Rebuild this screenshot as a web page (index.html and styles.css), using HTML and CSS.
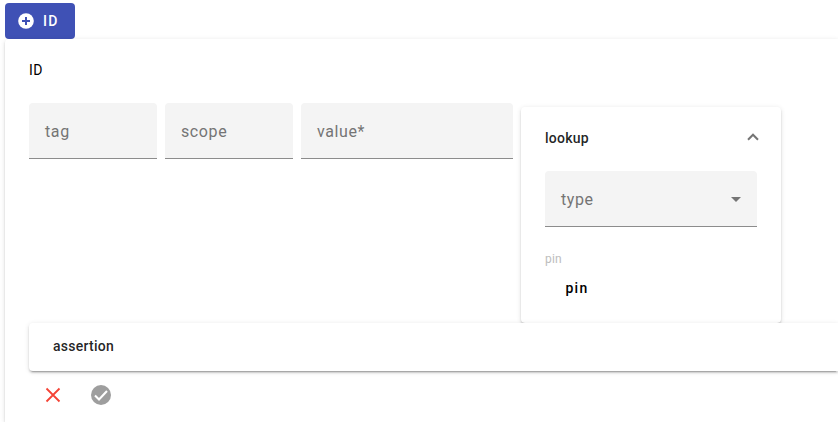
FILE: index.html
```html
<!DOCTYPE html>
<html lang="en">
<head>
<meta charset="utf-8">
<title>ID</title>
<link rel="stylesheet" href="styles.css">
</head>
<body>
<button class="add-button">
  <svg class="add-icon" viewBox="0 0 16 16"><circle cx="8" cy="8" r="7.8" fill="#fff"/><path d="M8 4v8M4 8h8" stroke="#3f51b5" stroke-width="2"/></svg>
  <span>ID</span>
</button>
<section class="panel main-panel">
  <h2 class="panel-title main-title">ID</h2>
  <div class="fields">
    <div class="field">tag</div>
    <div class="field">scope</div>
    <div class="field field-wide">value*</div>
    <section class="panel lookup">
      <header class="lookup-header">
        <h3 class="panel-title">lookup</h3>
        <svg class="chevron" viewBox="0 0 12 8"><path d="M1 6.7 6 1.7l5 5" fill="none" stroke="#757575" stroke-width="2"/></svg>
      </header>
      <div class="field field-wide select">type
        <svg class="arrow" viewBox="0 0 10 5"><path d="M0 0h10L5 5z" fill="#757575"/></svg>
      </div>
      <div class="pin-label">pin</div>
      <div class="pin-button">pin</div>
    </section>
  </div>
  <section class="panel assertion"><h3 class="panel-title">assertion</h3></section>
  <div class="actions">
    <svg class="action-icon" viewBox="0 0 24 24"><path d="m5.5 5.5 13 13m0-13-13 13" stroke="#f44336" stroke-width="1.8"/></svg>
    <svg class="action-icon" viewBox="0 0 24 24"><circle cx="12" cy="12" r="10" fill="#9e9e9e"/><path d="m6 12.5 4 4 8-8.5" fill="none" stroke="#fff" stroke-width="2.1"/></svg>
  </div>
</section>
</body>
</html>
```
FILE: styles.css
```css
* { box-sizing: border-box; }
body {
  height: 100vh;
  margin: 0;
  padding: 3px 0 0 5px;
  background: #fff;
  font-family: Roboto, sans-serif;
  overflow: hidden;
}
.add-button {
  display: flex;
  align-items: center;
  gap: 9px;
  width: 70px;
  height: 36px;
  padding: 0 0 0 13px;
  border: 0;
  border-radius: 4px;
  background: #3f51b5;
  color: #fff;
  font: 500 14px/36px Roboto, sans-serif;
  letter-spacing: 1.25px;
}
.add-icon { width: 16px; height: 16px; }
.panel {
  border-radius: 4px;
  background: #fff;
  box-shadow: 0 3px 1px -2px rgba(0,0,0,.2), 0 2px 2px rgba(0,0,0,.14), 0 1px 5px rgba(0,0,0,.12);
}
.main-panel {
  height: calc(100vh - 39px);
  padding: 20px 0 0 24px;
  border-radius: 4px 0 0 0;
}
.panel-title {
  margin: 0;
  font-size: 14px;
  line-height: 22px;
  font-weight: 500;
  letter-spacing: .25px;
  color: rgba(0,0,0,.87);
}
.main-title { font-weight: 400; letter-spacing: .4px; color: #000; }
.fields {
  display: flex;
  align-items: flex-start;
  gap: 8px;
  margin-top: 22px;
}
.field {
  width: 128px;
  height: 56px;
  padding: 0 16px;
  border-bottom: 1px solid #8c8c8c;
  border-radius: 4px 4px 0 0;
  background: #f4f4f4;
  color: #747474;
  font-size: 16px;
  line-height: 57px;
  letter-spacing: .6px;
}
.field-wide { width: 212px; }
.lookup {
  width: 260px;
  height: 216px;
  margin-top: 4px;
  padding: 0 24px;
}
.lookup-header {
  display: flex;
  align-items: center;
  justify-content: space-between;
  height: 64px;
  padding-bottom: 2px;
}
.chevron { width: 12px; height: 8px; margin: -2px -2px 0 0; }
.select {
  display: flex;
  align-items: center;
  justify-content: space-between;
  padding-top: 1px;
}
.arrow { width: 10px; height: 5px; }
.pin-label {
  margin-top: 24px;
  font-size: 12px;
  line-height: 16px;
  letter-spacing: .2px;
  color: #bdbdbd;
}
.pin-button {
  padding: 11px 0 0 20.5px;
  font-size: 14px;
  line-height: 20px;
  font-weight: 500;
  letter-spacing: 1.25px;
  color: #000;
}
.assertion {
  position: relative;
  height: 48px;
  padding: 12px 24px;
  border-radius: 4px 0 0 4px;
}
.actions {
  display: flex;
  gap: 24px;
  padding: 12px 0 0 12px;
}
.action-icon { width: 24px; height: 24px; }
```
